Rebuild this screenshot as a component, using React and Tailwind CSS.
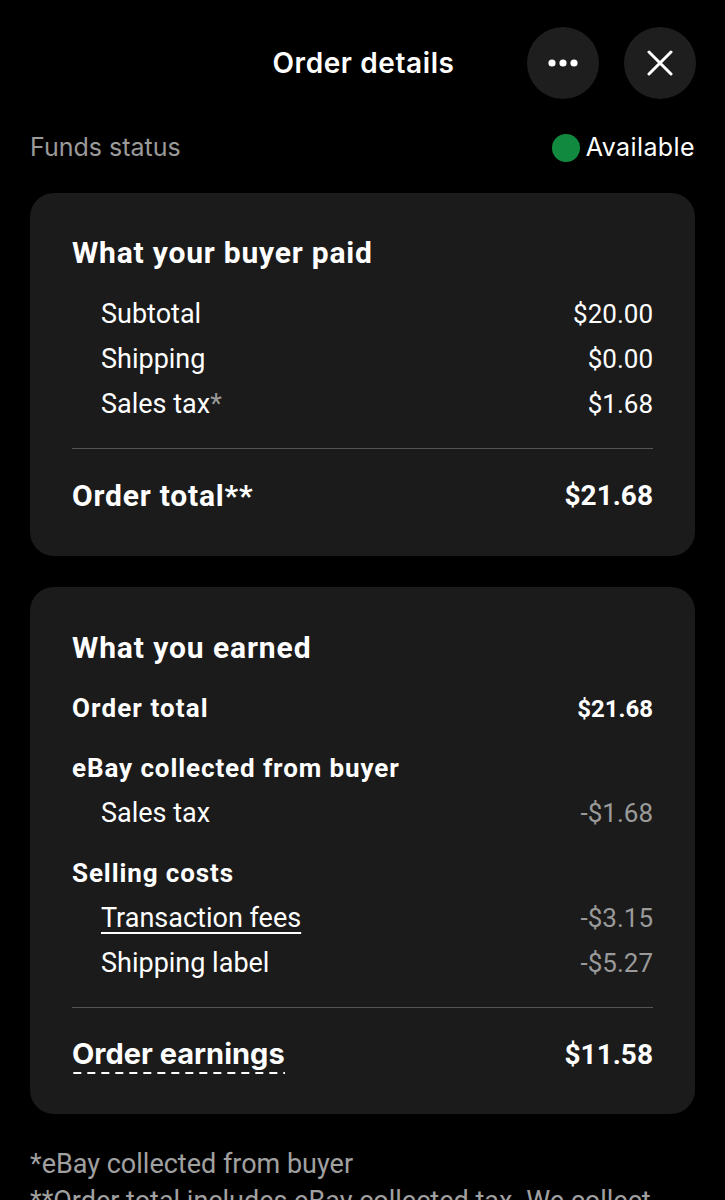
import React from "react";

const cond = { fontFamily: "Roboto, 'Liberation Sans', sans-serif" };
const inter = { fontFamily: "Inter, 'Noto Sans', sans-serif" };

function Row({ label, value, indent = true, gray = false, underline = false }) {
  return (
    <div className="flex h-[45px] items-center justify-between" style={cond}>
      <span
        className={`${indent ? "pl-[29px]" : ""} text-[27px] text-white ${underline ? "underline decoration-2 underline-offset-[5px]" : ""}`}
      >
        {label}
      </span>
      <span className={`text-[26px] ${gray ? "text-[#9a9a9a]" : "text-white"}`}>{value}</span>
    </div>
  );
}

function Head({ label }) {
  return (
    <div className="mt-[15px] flex h-[45px] items-center justify-between" style={cond}>
      <span className="text-[26px] font-bold tracking-[0.9px] text-white">{label}</span>
    </div>
  );
}

export default function App() {
  return (
    <div className="min-h-[1200px] w-[725px] overflow-hidden bg-black px-[30px] text-white">
      {/* header */}
      <div className="relative mt-[27px] flex h-[72px] items-center justify-end gap-[25px]">
        <div
          className="absolute left-0 right-0 text-center text-[28px] font-semibold tracking-[0.6px] text-white"
          style={inter}
        >
          <span className="ml-[2px]">Order details</span>
        </div>
        <button className="relative flex h-[72px] w-[72px] items-center justify-center rounded-full bg-[#1e1e1e]">
          <svg width="30" height="8" viewBox="0 0 30 8">
            <circle cx="4" cy="4" r="3.6" fill="white" />
            <circle cx="15" cy="4" r="3.6" fill="white" />
            <circle cx="26" cy="4" r="3.6" fill="white" />
          </svg>
        </button>
        <button className="relative mr-[-1px] flex h-[72px] w-[72px] items-center justify-center rounded-full bg-[#1e1e1e]">
          <svg width="26" height="26" viewBox="0 0 26 26">
            <path d="M2 2 L24 24 M24 2 L2 24" stroke="white" strokeWidth="3" strokeLinecap="round" />
          </svg>
        </button>
      </div>

      {/* funds status */}
      <div className="mt-[34px] flex h-[30px] items-center justify-between" style={inter}>
        <span className="text-[25px] text-[#9a9a9a]">Funds status</span>
        <span className="flex items-center gap-[6px]">
          <span className="h-[28px] w-[28px] rounded-full bg-[#118a3f]" />
          <span className="text-[25px] tracking-[0.4px] text-white">Available</span>
        </span>
      </div>

      {/* card 1 */}
      <div className="mt-[30px] rounded-[24px] bg-[#1b1b1b] px-[42px] pb-[38px] pt-[37px]">
        <div className="flex h-[45px] items-center" style={cond}>
          <span className="text-[30px] font-bold tracking-[0.8px] text-white">What your buyer paid</span>
        </div>
        <div className="mt-[17px]">
          <Row label="Subtotal" value="$20.00" />
          <Row label="Shipping" value="$0.00" />
          <Row
            label={
              <>
                Sales tax<span className="text-[#9a9a9a]">*</span>
              </>
            }
            value="$1.68"
          />
        </div>
        <div className="mt-[21px] h-px bg-[#555555]" />
        <div className="mt-[24px] flex h-[45px] items-center justify-between" style={cond}>
          <span className="text-[30px] font-bold tracking-[0.8px] text-white">Order total**</span>
          <span className="text-[28px] font-bold text-white">$21.68</span>
        </div>
      </div>

      {/* card 2 */}
      <div className="mt-[31px] rounded-[24px] bg-[#1b1b1b] px-[42px] pb-[37px] pt-[38px]">
        <div className="flex h-[45px] items-center" style={cond}>
          <span className="text-[30px] font-bold tracking-[0.9px] text-white">What you earned</span>
        </div>
        <div className="mt-[16px] flex h-[45px] items-center justify-between" style={cond}>
          <span className="text-[26px] font-bold tracking-[1.1px] text-white">Order total</span>
          <span className="text-[24px] font-bold text-white">$21.68</span>
        </div>
        <Head label="eBay collected from buyer" />
        <Row label="Sales tax" value="-$1.68" gray />
        <Head label="Selling costs" />
        <Row label="Transaction fees" value="-$3.15" gray underline />
        <Row label="Shipping label" value="-$5.27" gray />
        <div className="mt-[21px] h-px bg-[#555555]" />
        <div className="mt-[24px] flex h-[45px] items-center justify-between">
          <span
            className="bg-[linear-gradient(to_right,#ffffff_8px,transparent_8px)] bg-[length:14px_2px] bg-bottom bg-repeat-x pb-[2px] text-[29px] font-bold leading-[36px] text-white"
            style={inter}
          >
            Order earnings
          </span>
          <span className="text-[28px] font-bold text-white" style={cond}>$11.58</span>
        </div>
      </div>

      {/* footer */}
      <div className="mt-[32px] text-[27px] leading-[37px] text-[#a0a0a0]" style={cond}>
        <p>*eBay collected from buyer</p>
        <p className="whitespace-nowrap">**Order total includes eBay collected tax. We collect</p>
      </div>
    </div>
  );
}
